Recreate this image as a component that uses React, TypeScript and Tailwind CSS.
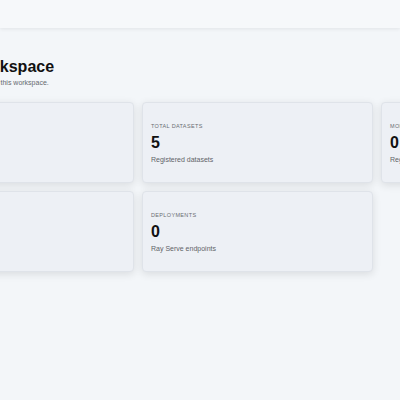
export default function App() {
  const cards = [
    { label: "Total Projects", value: "3", note: "Active projects" },
    { label: "Total Datasets", value: "5", note: "Registered datasets" },
    { label: "Models", value: "0", note: "Registered models" },
    { label: "Training Jobs", value: "0", note: "Ray Train runs" },
    { label: "Deployments", value: "0", note: "Ray Serve endpoints" },
  ];

  return (
    <div className="w-[400px] h-[400px] overflow-hidden bg-[#f3f6f9] font-['Liberation_Sans',Arial,sans-serif] text-[#111111]">
      {/* top bar */}
      <header className="h-[28px] w-full bg-[#f6f8fa] shadow-[0_1px_4px_rgba(0,0,0,0.08)]" />

      <main className="ml-[-97px] w-[720px] pt-[29px]">
        <div className="ml-[66px]">
          <h1 className="text-[16px] leading-[20px] font-bold">Workspace</h1>
          <p className="text-[7px] leading-[10px] text-[#666a70] mt-[1px]">Activity in this workspace.</p>
        </div>

        <div className="grid grid-cols-[231px_231px_231px] gap-[8px] mt-[14px]">
          {cards.map((c) => (
            <div
              key={c.label}
              className="h-[81px] rounded-[4px] border border-[#dfe3e9] bg-[#edf0f5] px-[8px] pt-[19px] shadow-[0_2px_8px_rgba(0,0,0,0.11)]"
            >
              <p className="text-[5.5px] leading-[8px] uppercase tracking-[0.35px] text-[#6a6d72]">{c.label}</p>
              <p className="text-[16px] leading-[16px] font-bold mt-[5px]">{c.value}</p>
              <p className="text-[7px] leading-[9px] text-[#5f6368] mt-[4px]">{c.note}</p>
            </div>
          ))}
        </div>
      </main>
    </div>
  );
}
